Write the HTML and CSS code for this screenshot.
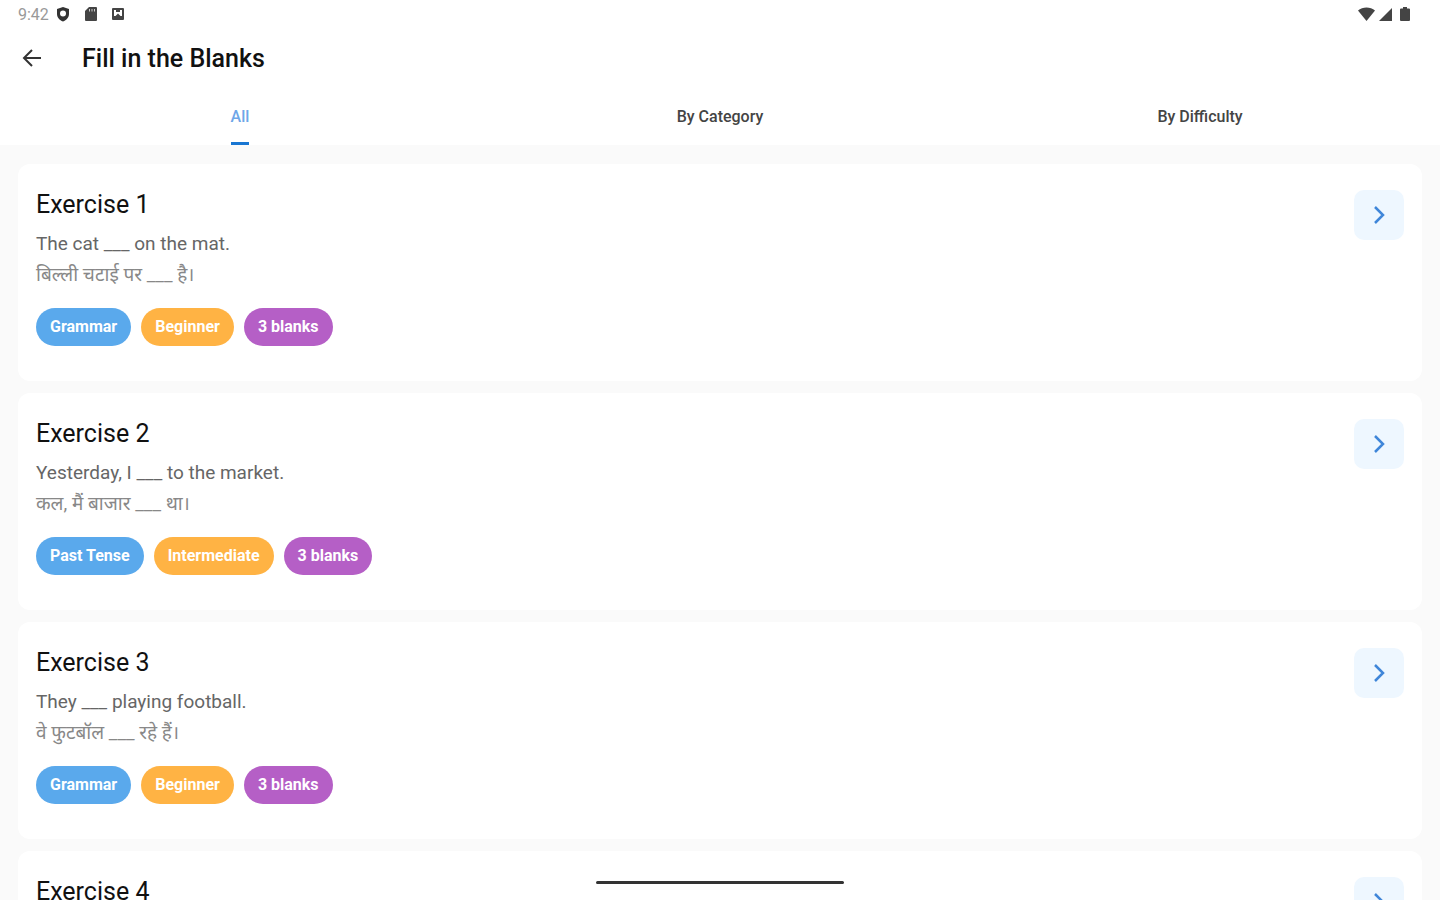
FILE: index.html
```html
<!DOCTYPE html>
<html lang="en">
<head>
  <meta charset="UTF-8">
  <meta name="viewport" content="width=device-width, initial-scale=1.0">
  <title>Fill in the Blanks</title>
  <link rel="stylesheet" href="styles.css">
</head>
<body>
  <div class="status-bar">
    <div class="status-left">
      <span class="clock">9:42</span>
      <svg width="14" height="16" viewBox="0 0 14 16"><path fill="#333" fill-rule="evenodd" d="M7 1l6 2v5c0 3.500-2.500 6-6 7.500C3.500 14 1 11.500 1 8V3zM7 4.500a3 3 0 1 0 0 6 3 3 0 0 0 0-6z"/></svg>
      <svg width="12" height="14" viewBox="0 0 12 14"><path fill="#444" d="M4 0h7a1 1 0 0 1 1 1v12a1 1 0 0 1-1 1H1a1 1 0 0 1-1-1V4z"/><path stroke="#ccc" d="M4.500 2v2.500M7 2v2.500M9.500 2v2.500"/></svg>
      <svg width="12" height="12" viewBox="0 0 12 12"><path fill="#444" fill-rule="evenodd" d="M1 0h10a1 1 0 0 1 1 1v10a1 1 0 0 1-1 1H1a1 1 0 0 1-1-1V1a1 1 0 0 1 1-1zM2 2v6h1.500L6 5.500 8.500 8H10V2H8v2H4V2z"/></svg>
    </div>
    <div class="status-right">
      <svg width="17" height="14" viewBox="0 0 17 14"><path fill="#444" d="M8.500 14L0 3.500C4.500-.5 12.500-.5 17 3.500z"/></svg>
      <svg width="13" height="13" viewBox="0 0 13 13"><path fill="#444" d="M13 0v13H0z"/></svg>
      <svg width="10" height="14" viewBox="0 0 10 14"><path fill="#444" d="M3 0h4v1.500h2a1 1 0 0 1 1 1V13a1 1 0 0 1-1 1H1a1 1 0 0 1-1-1V2.500a1 1 0 0 1 1-1h2z"/></svg>
    </div>
  </div>

  <header class="app-bar">
    <button class="back-btn" type="button" aria-label="Back">
      <svg width="20" height="20" viewBox="0 0 20 20"><path fill="none" stroke="#333" stroke-width="2" d="M19 10H3M10 2l-8 8 8 8"/></svg>
    </button>
    <h1>Fill in the Blanks</h1>
  </header>

  <nav class="tabs">
    <button class="tab active" type="button"><span>All</span></button>
    <button class="tab" type="button"><span>By Category</span></button>
    <button class="tab" type="button"><span>By Difficulty</span></button>
  </nav>

  <main class="exercise-list">
    <article class="card">
      <div class="card-body">
        <h2>Exercise 1</h2>
        <p class="sentence">The cat ___ on the mat.</p>
        <p class="translation" lang="hi">बिल्ली चटाई पर ___ है।</p>
        <div class="chips">
          <span class="chip category">Grammar</span>
          <span class="chip level">Beginner</span>
          <span class="chip blanks">3 blanks</span>
        </div>
      </div>
      <button class="open-btn" type="button" aria-label="Open Exercise 1">
        <svg width="12" height="18" viewBox="0 0 12 18"><path d="M2 1l8 8-8 8"/></svg>
      </button>
    </article>

    <article class="card">
      <div class="card-body">
        <h2>Exercise 2</h2>
        <p class="sentence">Yesterday, I ___ to the market.</p>
        <p class="translation" lang="hi">कल, मैं बाजार ___ था।</p>
        <div class="chips">
          <span class="chip category">Past Tense</span>
          <span class="chip level">Intermediate</span>
          <span class="chip blanks">3 blanks</span>
        </div>
      </div>
      <button class="open-btn" type="button" aria-label="Open Exercise 2">
        <svg width="12" height="18" viewBox="0 0 12 18"><path d="M2 1l8 8-8 8"/></svg>
      </button>
    </article>

    <article class="card">
      <div class="card-body">
        <h2>Exercise 3</h2>
        <p class="sentence">They ___ playing football.</p>
        <p class="translation" lang="hi">वे फुटबॉल ___ रहे हैं।</p>
        <div class="chips">
          <span class="chip category">Grammar</span>
          <span class="chip level">Beginner</span>
          <span class="chip blanks">3 blanks</span>
        </div>
      </div>
      <button class="open-btn" type="button" aria-label="Open Exercise 3">
        <svg width="12" height="18" viewBox="0 0 12 18"><path d="M2 1l8 8-8 8"/></svg>
      </button>
    </article>

    <article class="card">
      <div class="card-body">
        <h2>Exercise 4</h2>
      </div>
      <button class="open-btn" type="button" aria-label="Open Exercise 4">
        <svg width="12" height="18" viewBox="0 0 12 18"><path d="M2 1l8 8-8 8"/></svg>
      </button>
    </article>
  </main>

  <div class="home-indicator"></div>
</body>
</html>
```

FILE: styles.css
```css
:root {
  --blue: #1976d2;
  --chip-blue: #5aa9ec;
  --chip-orange: #ffb344;
  --chip-purple: #b55fc6;
  --page: #fafafa;
}

* {
  box-sizing: border-box;
}

body {
  margin: 0;
  height: 100vh;
  display: flex;
  flex-direction: column;
  overflow: hidden;
  background: #fff;
  color: #111;
  font-family: Roboto, "Noto Sans", sans-serif;
}

h1, h2, p {
  margin: 0;
}

button {
  padding: 0;
  border: none;
  background: none;
  font: inherit;
  color: inherit;
  cursor: pointer;
}

svg {
  display: block;
}

/* system status bar */
.status-bar {
  display: flex;
  justify-content: space-between;
  flex-shrink: 0;
  height: 28px;
  padding: 0 30px 0 18px;
}

.status-left,
.status-right {
  display: flex;
  align-items: center;
}

.status-left {
  gap: 15px;
}

.status-right {
  gap: 4px;
}

.status-right svg:last-child {
  margin-left: 4px;
}

.clock {
  margin-right: -8px;
  font-size: 16px;
  color: #999;
}

.app-bar {
  display: flex;
  align-items: center;
  gap: 40px;
  flex-shrink: 0;
  height: 60px;
  padding: 0 22px;
}

.app-bar h1 {
  font-size: 25px;
  font-weight: 500;
}

.tabs {
  display: grid;
  grid-template-columns: repeat(3, 1fr);
  flex-shrink: 0;
  height: 57px;
}

.tab {
  display: flex;
  justify-content: center;
  font-size: 16px;
  font-weight: 500;
  color: #444;
}

.tab span {
  height: 57px;
  line-height: 57px;
  border-bottom: 3px solid transparent;
}

.tab.active {
  color: #6ea6e8;
}

.tab.active span {
  border-bottom-color: var(--blue);
}

.exercise-list {
  flex: 1;
  display: flex;
  flex-direction: column;
  gap: 12px;
  min-height: 0;
  padding: 19px 18px 0;
  overflow: hidden;
  background: var(--page);
}

.card {
  display: flex;
  justify-content: space-between;
  align-items: flex-start;
  flex-shrink: 0;
  padding: 26px 18px 35px;
  border-radius: 12px;
  background: #fff;
}

.card h2 {
  margin-bottom: 8px;
  font-size: 25px;
  line-height: 30px;
  font-weight: 400;
}

.sentence,
.translation {
  font-size: 19px;
  line-height: 31px;
  color: #666;
}

.translation {
  color: #888;
}

.chips {
  display: flex;
  gap: 10px;
  margin-top: 18px;
}

.chip {
  padding: 0 14px;
  border-radius: 19px;
  font-size: 16px;
  line-height: 38px;
  font-weight: 700;
  color: #fff;
}

.category {
  background: var(--chip-blue);
}

.level {
  background: var(--chip-orange);
}

.blanks {
  background: var(--chip-purple);
}

.open-btn {
  display: grid;
  place-items: center;
  width: 50px;
  height: 50px;
  border-radius: 10px;
  background: #eef7ff;
}

.open-btn path {
  fill: none;
  stroke: #3f86d9;
  stroke-width: 2.5;
}

/* gesture bar sits over the list */
.home-indicator {
  position: fixed;
  bottom: 16px;
  left: 50%;
  width: 248px;
  height: 3px;
  margin-left: -124px;
  border-radius: 2px;
  background: #333;
}
```
